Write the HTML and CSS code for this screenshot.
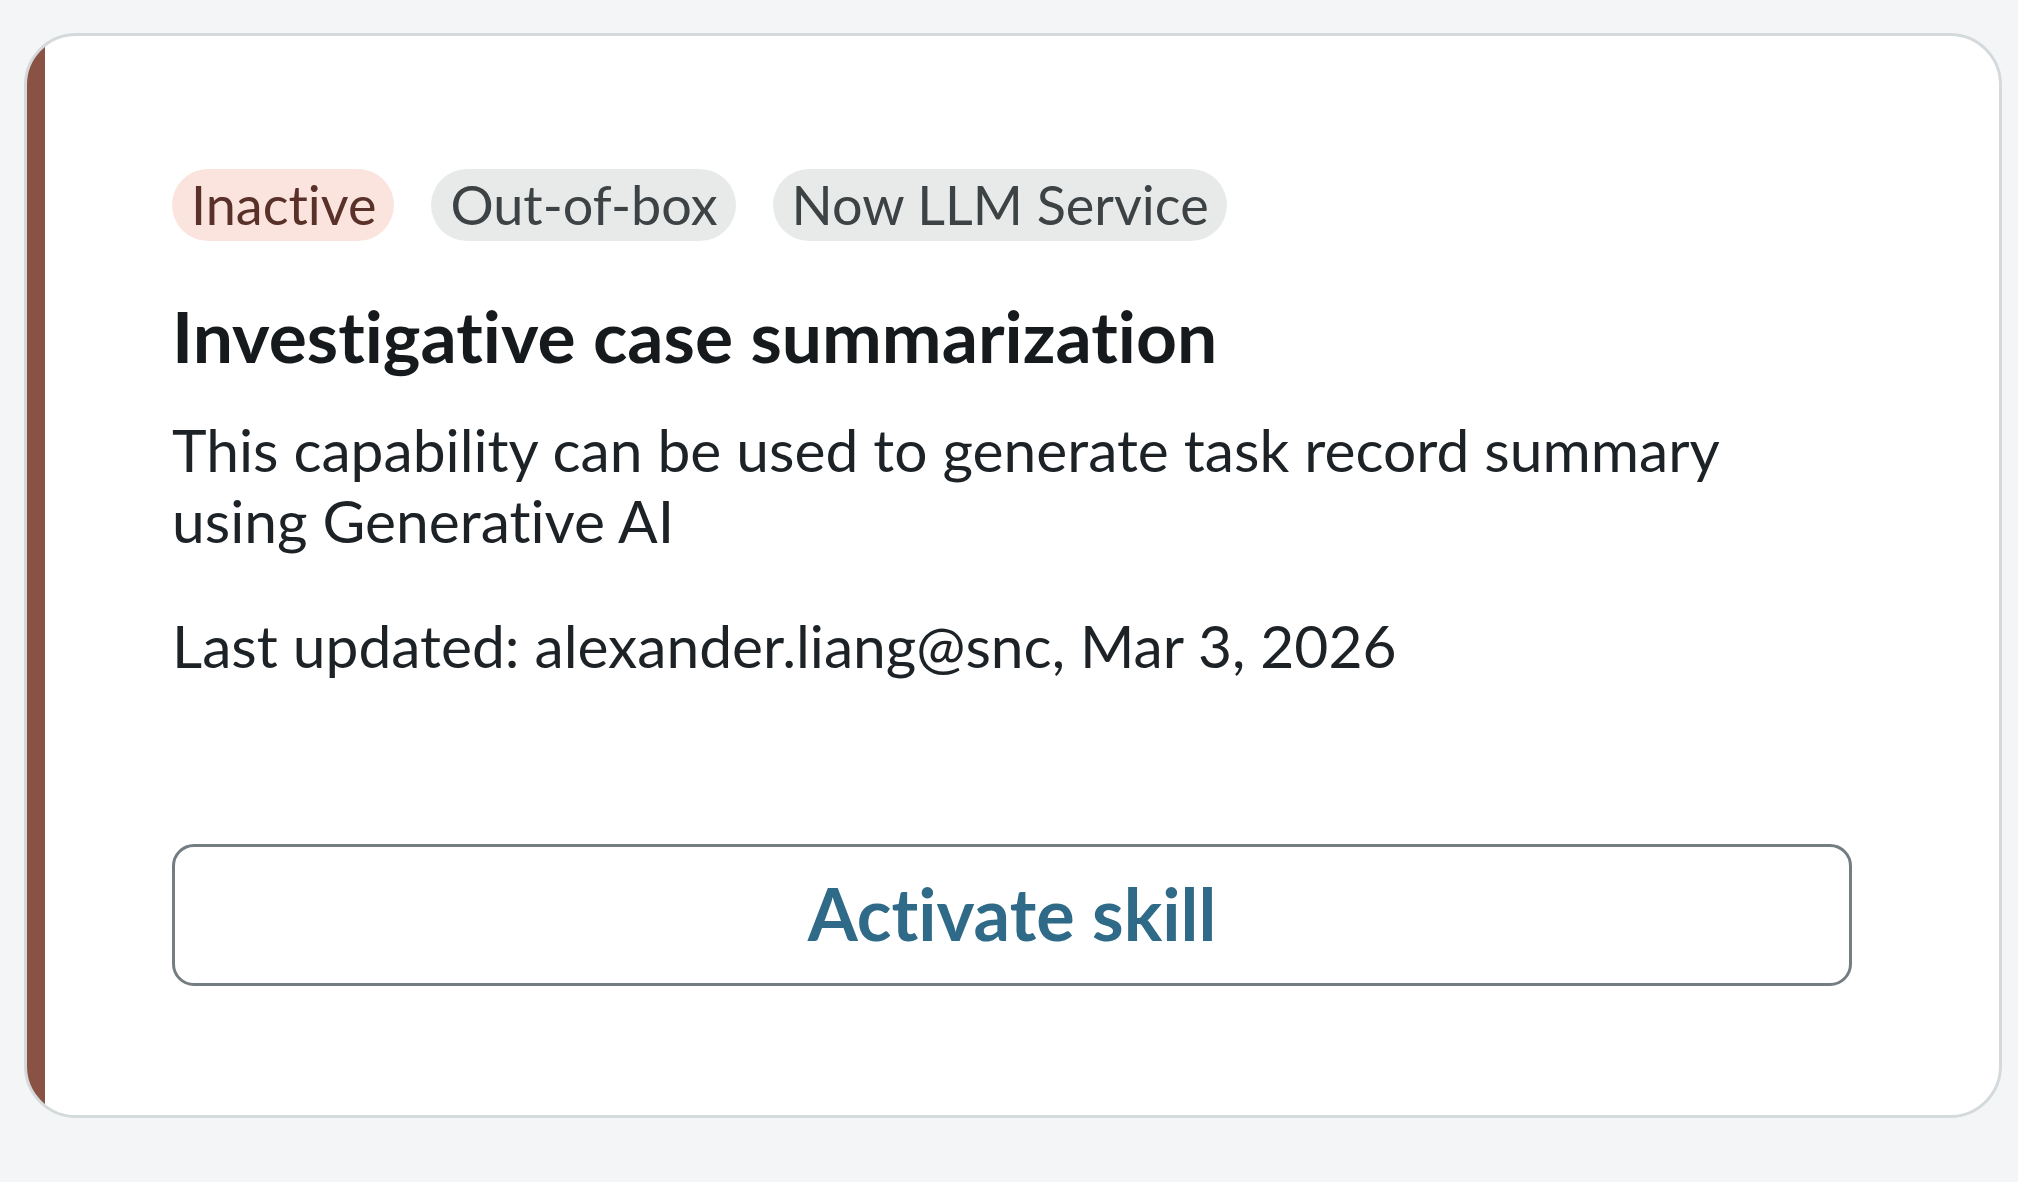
FILE: index.html
```html
<!DOCTYPE html>
<html lang="en">
<head>
<meta charset="utf-8">
<title>Skill card</title>
<link rel="stylesheet" href="styles.css">
</head>
<body>
  <article class="card">
    <div class="tags">
      <span class="tag tag-inactive">Inactive</span>
      <span class="tag">Out-of-box</span>
      <span class="tag">Now LLM Service</span>
    </div>
    <h2 class="title">Investigative case summarization</h2>
    <p class="desc">This capability can be used to generate task record summary using Generative AI</p>
    <p class="meta">Last updated: alexander.liang@snc, Mar 3, 2026</p>
    <button class="activate" type="button">Activate skill</button>
  </article>
</body>
</html>
```
FILE: styles.css
```css
html, body {
  margin: 0;
  padding: 0;
  background: #f4f5f7;
}
body {
  padding: 33px 16px 64px 24px;
  font-family: Lato, "Noto Sans", sans-serif;
  font-variant-ligatures: none;
  font-feature-settings: "liga" 0, "clig" 0;
}
.card {
  box-sizing: border-box;
  width: 1978px;
  background: linear-gradient(to right, #8a5244 18px, #ffffff 18px);
  border: 3px solid #d4dadb;
  border-radius: 52px;
  padding: 133px 147px 129px 145px;
  display: flex;
  flex-direction: column;
}
.tags {
  display: flex;
  gap: 37px;
}
.tag {
  display: inline-block;
  font-size: 54px;
  line-height: 62px;
  padding: 5px 18px 5px 19px;
  border-radius: 40px;
  background: #e8eaea;
  color: #3d4244;
}
.tag-inactive {
  background: #fbe3de;
  color: #5a3129;
}
.title {
  margin: 52px 0 0;
  font-size: 71.4px;
  line-height: 85px;
  font-weight: 700;
  color: #161a1d;
}
.desc {
  margin: 36px 0 0;
  font-size: 58.7px;
  line-height: 71px;
  color: #1d2226;
}
.meta {
  margin: 54px 0 0;
  font-size: 58.7px;
  line-height: 71px;
  color: #1d2226;
}
.activate {
  margin-top: 163px;
  height: 142px;
  padding: 0 0 4px;
  border: 3px solid #747e82;
  border-radius: 22px;
  background: #ffffff;
  font-family: Lato, "Noto Sans", sans-serif;
  font-variant-ligatures: none;
  font-feature-settings: "liga" 0, "clig" 0;
  font-size: 72px;
  font-weight: 700;
  color: #2f6b88;
  cursor: pointer;
}
```
